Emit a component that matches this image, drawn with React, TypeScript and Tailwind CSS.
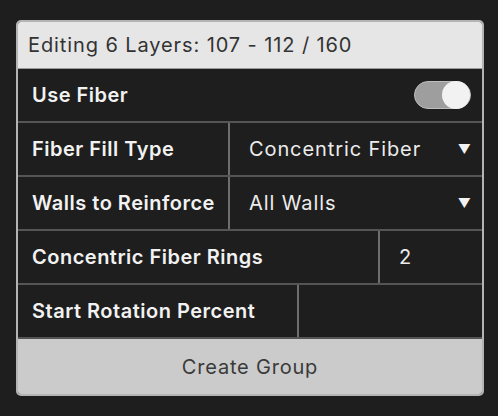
import React from 'react';

function Caret() {
  return <span className="text-[13px] leading-none text-[#f2f2f2]">▼</span>;
}

function Row({ children }: { children: React.ReactNode }) {
  return <div className="flex h-[54px] border-b-2 border-[#555555]">{children}</div>;
}

function Label({ children }: { children: React.ReactNode }) {
  return <span className="text-[20px] font-semibold tracking-[0.5px] text-[#f2f2f2]">{children}</span>;
}

function Value({ children }: { children: React.ReactNode }) {
  return <span className="text-[20px] tracking-[0.9px] text-[#ececec]">{children}</span>;
}

export default function App() {
  return (
    <div
      className="w-[498px] h-[416px] bg-[#1e1e1e] pt-[20px] pl-[16px]"
      style={{ fontFamily: 'Inter, "Noto Sans", sans-serif' }}
    >
      <div className="w-[468px] h-[376px] rounded-[5px] border-2 border-[#b4b4b4] overflow-hidden flex flex-col">
        {/* Header */}
        <div className="h-[47px] bg-[#e6e6e6] flex items-center pl-[10px] text-[20px] tracking-[0.9px] text-[#333333] border-b border-[#9a9a9a]">
          Editing 6 Layers: 107 - 112 / 160
        </div>

        <Row>
          <div className="flex-1 flex items-center justify-between pl-[14px] pr-[11px]">
            <Label>Use Fiber</Label>
            <div className="w-[57px] h-[28px] rounded-full bg-[#9e9e9e] border border-[#bdbdbd] flex items-center justify-end">
              <div className="w-[28px] h-[28px] rounded-full bg-[#f2f2f2]" />
            </div>
          </div>
        </Row>

        <Row>
          <div className="w-[212px] flex items-center pl-[14px] border-r-2 border-[#6e6e6e]">
            <Label>Fiber Fill Type</Label>
          </div>
          <div className="flex-1 flex items-center justify-between pl-[19px] pr-[11px]">
            <Value>Concentric Fiber</Value>
            <Caret />
          </div>
        </Row>

        <Row>
          <div className="w-[212px] flex items-center pl-[14px] border-r-2 border-[#6e6e6e]">
            <Label>Walls to Reinforce</Label>
          </div>
          <div className="flex-1 flex items-center justify-between pl-[19px] pr-[11px]">
            <Value>All Walls</Value>
            <Caret />
          </div>
        </Row>

        <Row>
          <div className="w-[362px] flex items-center pl-[14px] border-r-2 border-[#6e6e6e]">
            <Label>Concentric Fiber Rings</Label>
          </div>
          <div className="flex-1 flex items-center pl-[19px]">
            <Value>2</Value>
          </div>
        </Row>

        <Row>
          <div className="w-[281px] flex items-center pl-[14px] border-r-2 border-[#6e6e6e]">
            <Label>Start Rotation Percent</Label>
          </div>
          <div className="flex-1" />
        </Row>

        {/* Button */}
        <div className="flex-1 bg-[#cbcbcb] flex items-center justify-center text-[20px] tracking-[0.8px] text-[#3a3a3a]">
          Create Group
        </div>
      </div>
    </div>
  );
}
